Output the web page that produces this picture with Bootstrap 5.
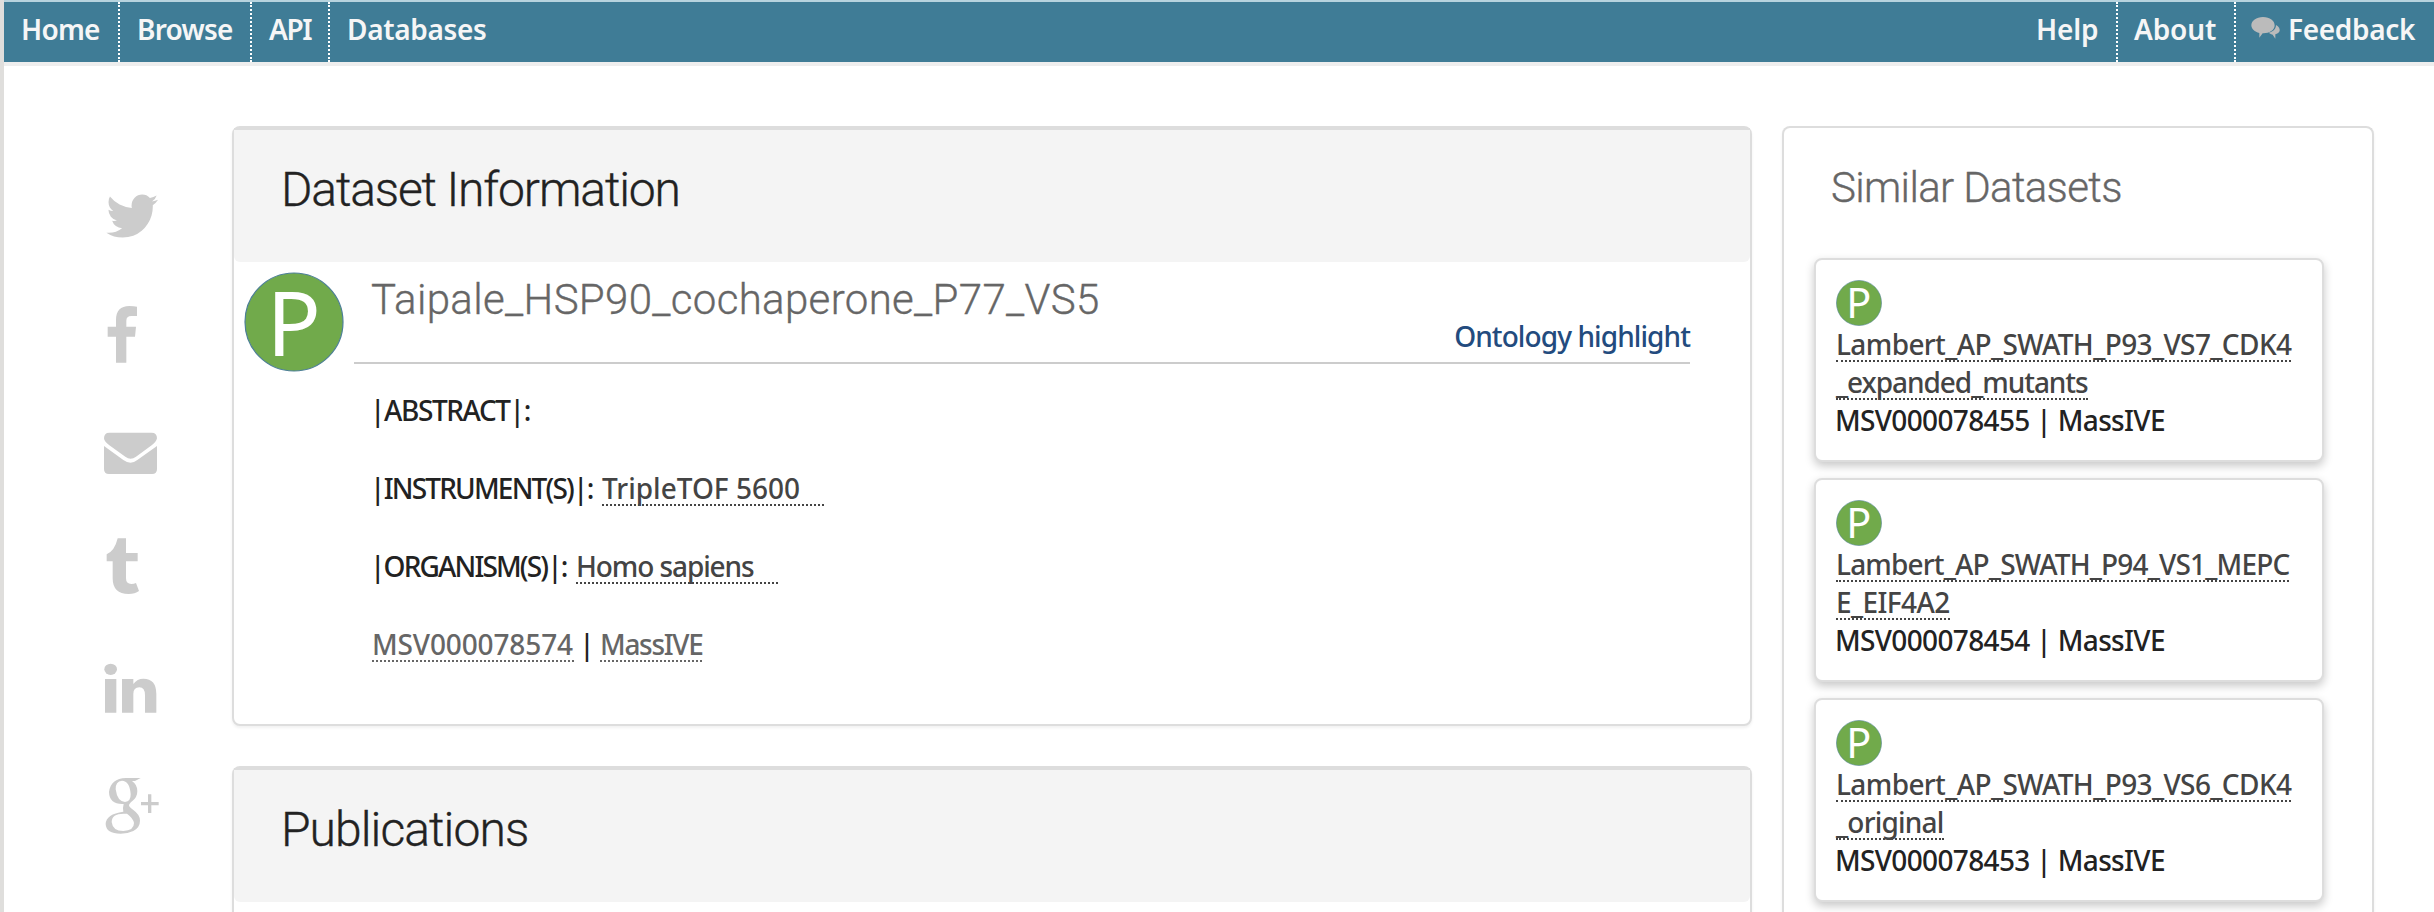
<!DOCTYPE html>
<html lang="en">
<head>
<meta charset="utf-8">
<title>Dataset Information</title>
<link href="https://cdn.jsdelivr.net/npm/bootstrap@5.3.0/dist/css/bootstrap.min.css" rel="stylesheet">
<style>
body{font:500 28px/38px "Noto Sans","Open Sans",sans-serif;color:#222;background:#fff;height:912px;overflow:hidden;border-left:4px solid #dfdedc}
a{color:inherit;text-decoration:none}
.topbar{height:66px;padding:0;background:#3f7c96;border-top:2px solid #b7d3de;border-bottom:4px solid #eee;font-weight:600}
.topbar .nav-link{height:60px;padding:8px 0 0 17px;line-height:38px;border-left:2px dotted #fff;color:#f6f6f6;white-space:nowrap}
.topbar .nav-link:hover{color:#fff}
.topbar .nav-link.first{border-left:0}
.chat{width:30px;height:24px;fill:#bbb;margin:6px 7px 0 -2px}
.light-title{font-family:Roboto,sans-serif;font-weight:300;margin:0;white-space:nowrap;-webkit-text-stroke:.35px currentColor}
.page-row{padding-top:60px}
.social{width:228px;padding-left:100px}
.social svg{display:block;fill:#ccc;width:60px;height:60px;margin-top:60px}
.main-col{width:1520px}
.panel{border:2px solid #ddd;border-radius:8px;box-shadow:0 2px 3px rgba(0,0,0,.06);background:#fff}
.panel.cut{border-bottom:0;border-bottom-left-radius:0;border-bottom-right-radius:0}
.info{height:600px;margin-bottom:40px}
.pubs{height:146px}
.panel-head{height:134px;background:#f4f4f4;border-top:2px solid #ddd;border-radius:0 0 6px 6px;padding:31px 0 0 47px}
.panel-head .light-title{font-size:48px;line-height:58px;letter-spacing:-1.15px}
.big-logo{margin:10px 10px 0 10px;overflow:visible}
.title-row{width:1336px;height:102px;border-bottom:2px solid #ccc;color:#666}
.set-title{font-size:42px;line-height:50px;padding:13px 0 0 17px;letter-spacing:.34px}
.onto{color:#234b7e;padding-top:55px;letter-spacing:-.91px}
.facts{padding:26px 0 0 18px}
.line-item{height:38px;line-height:40px;margin-bottom:40px;white-space:pre;display:flex}
.line-item .key{margin-left:-2px;flex:none}
.term{border-bottom:2px dotted #444;color:#444;display:inline-block;height:38px;line-height:40px;white-space:pre}
.term.grey{color:#666;border-color:#666}
.side-col{width:592px;height:786px;margin-left:30px;padding:35px 0 0 30px}
.side-title{font-size:42px;line-height:50px;color:#666;margin:0 0 45px 17px;letter-spacing:-.65px}
.hit{width:510px;height:204px;border:2px solid #ddd;border-radius:8px;box-shadow:0 4px 10px rgba(0,0,0,.22);padding:20px 20px 0;background:#fff;margin-bottom:16px}
.hit:last-child{margin-bottom:0}
.hit svg{display:block;margin-bottom:-2px;overflow:visible}
.hit .ln{height:38px;line-height:40px;white-space:nowrap;display:flex}
.hit .acc{letter-spacing:-.65px;margin-left:-1px}
</style>
</head>
<body>
<nav class="topbar navbar navbar-expand d-flex align-items-start justify-content-between flex-nowrap">
  <div class="d-flex">
    <a class="nav-link first" style="width:114px;letter-spacing:-.77px" href="#">Home</a>
    <a class="nav-link" style="width:132px;letter-spacing:-.76px" href="#">Browse</a>
    <a class="nav-link" style="width:78px;letter-spacing:-1.4px" href="#">API</a>
    <a class="nav-link" style="letter-spacing:-.34px" href="#">Databases</a>
  </div>
  <div class="d-flex">
    <a class="nav-link first" style="width:97px;letter-spacing:-.16px" href="#">Help</a>
    <a class="nav-link" style="width:118px;letter-spacing:-.12px;padding-left:16px" href="#">About</a>
    <a class="nav-link d-flex" style="width:200px;letter-spacing:-.33px" href="#"><svg class="chat" viewBox="814 48 90 72"><path d="M850 51C871 51 885 62 885 76C885 91 868 101 849 100L839 113V99C825 96 815 87 815 76C815 62 830 51 850 51Z"/><path d="M889 75C898 80 901 87 900 92C899 98 893 101 887 103V116L879 104Q873 103 867 98C882 95 889 86 889 75Z"/></svg>Feedback</a>
  </div>
</nav>
<div class="page-row d-flex">
  <aside class="social">
    <svg viewBox="72 48 180 180"><path transform="translate(68.400 48) scale(.0985 .1008)" d="M1684 408q-67 98-162 167 1 14 1 42 0 130-38 259.500t-115.500 248.500-184.500 210.500-258 146-323 54.500q-271 0-496-145 35 4 78 4 225 0 401-138-105-2-188-64.500t-114-159.500q33 5 61 5 43 0 85-11-112-23-185.500-111.500t-73.500-205.500v-4q68 38 146 41-66-44-105-115t-39-154q0-88 44-163 121 149 294.500 238.500t371.500 99.500q-8-38-8-74 0-134 94.500-228.500t228.500-94.500q140 0 236 102 109-21 205-78-37 115-142 178 93-10 186-50z"/></svg>
    <svg style="margin-top:58px" viewBox="72 402 180 180"><path d="M108 578V500H83V470H108V450Q108 408 148 408Q162 408 171 410V438H154Q139 438 139 452V470H168L165 500H139V578Z"/></svg>
    <svg viewBox="72 762 180 180"><path d="M88 788H215Q231 788 231 805Q229 816 215 826L168 860Q152 872 136 860L88 826Q72 814 72 805Q72 788 88 788Z"/><path d="M72 828L130 870Q152 886 172 870L231 828V897Q231 912 216 912H87Q72 912 72 897Z"/></svg>
    <svg style="margin-top:50px" viewBox="72 72 180 180"><path d="M113 85H138V129H173V154H138V205Q138 222 154 222Q162 222 168 219L177 243Q165 252 146 252Q98 252 98 205V154H80V133Q104 123 113 85Z"/></svg>
    <svg style="margin-top:63px" viewBox="72 441 180 180"><ellipse cx="92" cy="478" rx="19" ry="17"/><path d="M75 507H109V608H75ZM126 507H160V522Q172 506 190 506Q229 506 229 552V608H195V556Q195 532 178 532Q160 532 160 552V608H126Z"/></svg>
    <svg style="margin-top:59px" viewBox="72 798 180 180"><path fill-rule="evenodd" d="M182 804L165 813H156Q172 824 172 843Q172 862 157 873Q147 881 147 886Q147 891 160 900Q180 914 180 932Q180 952 160 963Q144 971 122 971Q78 971 77 942Q78 912 130 905Q127 896 131 882Q88 884 87 846Q92 806 138 804ZM126 812Q106 814 107 838Q112 875 135 876Q153 874 152 852Q149 813 126 812ZM131 911Q95 911 95 936Q98 963 130 963Q162 962 162 939Q160 925 141 911Z"/><path d="M204 853H214V876H236V886H214V909H204V886H183V876H204Z"/></svg>
  </aside>
  <main class="main-col">
    <section class="panel info">
      <div class="panel-head"><h2 class="light-title">Dataset Information</h2></div>
      <div class="d-flex">
        <svg class="big-logo" width="100" height="100" viewBox="0 0 100 100"><circle cx="50" cy="50" r="49" fill="#71aa4b" stroke="#4d7f97" stroke-width="1.2"/><text x="22.500" y="83.500" font-size="90" font-weight="400" fill="#fff">P</text></svg>
        <div>
          <div class="title-row d-flex justify-content-between">
            <h3 class="light-title set-title">Taipale_HSP90_cochaperone_P77_VS5</h3>
            <a class="onto" href="#">Ontology highlight</a>
          </div>
          <div class="facts">
            <div class="line-item"><span class="key" style="width:170px;letter-spacing:-1.4px">|ABSTRACT|:</span></div>
            <div class="line-item"><span class="key" style="width:232px;letter-spacing:-1.8px">|INSTRUMENT(S)|:</span><span class="term" style="width:222px">TripleTOF 5600</span></div>
            <div class="line-item"><span class="key" style="width:206px;letter-spacing:-1.85px">|ORGANISM(S)|:</span><span class="term" style="width:202px;letter-spacing:-1.1px">Homo sapiens</span></div>
            <div class="line-item"><a class="term grey" style="width:202px;letter-spacing:-.13px" href="#">MSV000078574</a><span class="text-center" style="width:26px">|</span><a class="term grey" style="width:102px;letter-spacing:-1.3px" href="#">MassIVE</a></div>
          </div>
        </div>
      </div>
    </section>
    <section class="panel cut pubs">
      <div class="panel-head"><h2 class="light-title" style="letter-spacing:-.93px">Publications</h2></div>
    </section>
  </main>
  <aside class="side-col panel cut">
    <h3 class="light-title side-title">Similar Datasets</h3>
    <div class="hit">
      <svg width="46" height="46" viewBox="0 0 100 100"><circle cx="50" cy="50" r="49" fill="#71aa4b" stroke="#4d7f97" stroke-width="1.2"/><text x="22.500" y="83.500" font-size="90" font-weight="400" fill="#fff">P</text></svg>
      <div class="ln"><a class="term" style="letter-spacing:-.61px" href="#">Lambert_AP_SWATH_P93_VS7_CDK4</a></div>
      <div class="ln"><a class="term" style="letter-spacing:-1.05px" href="#">_expanded_mutants</a></div>
      <div class="ln acc">MSV000078455 | MassIVE</div>
    </div>
    <div class="hit">
      <svg width="46" height="46" viewBox="0 0 100 100"><circle cx="50" cy="50" r="49" fill="#71aa4b" stroke="#4d7f97" stroke-width="1.2"/><text x="22.500" y="83.500" font-size="90" font-weight="400" fill="#fff">P</text></svg>
      <div class="ln"><a class="term" style="letter-spacing:-.82px" href="#">Lambert_AP_SWATH_P94_VS1_MEPC</a></div>
      <div class="ln"><a class="term" style="letter-spacing:-.6px" href="#">E_EIF4A2</a></div>
      <div class="ln acc">MSV000078454 | MassIVE</div>
    </div>
    <div class="hit">
      <svg width="46" height="46" viewBox="0 0 100 100"><circle cx="50" cy="50" r="49" fill="#71aa4b" stroke="#4d7f97" stroke-width="1.2"/><text x="22.500" y="83.500" font-size="90" font-weight="400" fill="#fff">P</text></svg>
      <div class="ln"><a class="term" style="letter-spacing:-.61px" href="#">Lambert_AP_SWATH_P93_VS6_CDK4</a></div>
      <div class="ln"><a class="term" style="letter-spacing:-.8px" href="#">_original</a></div>
      <div class="ln acc">MSV000078453 | MassIVE</div>
    </div>
  </aside>
</div>
<script src="https://cdn.jsdelivr.net/npm/bootstrap@5.3.0/dist/js/bootstrap.bundle.min.js"></script>
</body>
</html>
